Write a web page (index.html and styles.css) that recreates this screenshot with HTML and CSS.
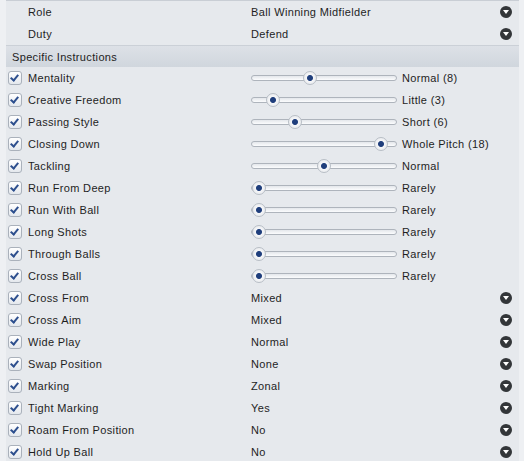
FILE: index.html
```html
<!DOCTYPE html>
<html>
<head>
<meta charset="utf-8">
<link rel="stylesheet" href="styles.css">
</head>
<body>
<div class="panel">
  <div class="row"><span class="cb-space"></span><span class="label">Role</span><span class="value">Ball Winning Midfielder</span><span class="dd"></span></div>
  <div class="row"><span class="cb-space"></span><span class="label">Duty</span><span class="value">Defend</span><span class="dd"></span></div>
  <div class="section">Specific Instructions</div>

  <div class="row"><span class="cb"></span><span class="label">Mentality</span><span class="slider"><span class="track"></span><span class="thumb" style="left:52px"></span></span><span class="sval">Normal (8)</span></div>
  <div class="row"><span class="cb"></span><span class="label">Creative Freedom</span><span class="slider"><span class="track"></span><span class="thumb" style="left:15px"></span></span><span class="sval">Little (3)</span></div>
  <div class="row"><span class="cb"></span><span class="label">Passing Style</span><span class="slider"><span class="track"></span><span class="thumb" style="left:37px"></span></span><span class="sval">Short (6)</span></div>
  <div class="row"><span class="cb"></span><span class="label">Closing Down</span><span class="slider"><span class="track"></span><span class="thumb" style="left:123px"></span></span><span class="sval">Whole Pitch (18)</span></div>
  <div class="row"><span class="cb"></span><span class="label">Tackling</span><span class="slider"><span class="track"></span><span class="thumb" style="left:66px"></span></span><span class="sval">Normal</span></div>
  <div class="row"><span class="cb"></span><span class="label">Run From Deep</span><span class="slider"><span class="track"></span><span class="thumb" style="left:1px"></span></span><span class="sval">Rarely</span></div>
  <div class="row"><span class="cb"></span><span class="label">Run With Ball</span><span class="slider"><span class="track"></span><span class="thumb" style="left:1px"></span></span><span class="sval">Rarely</span></div>
  <div class="row"><span class="cb"></span><span class="label">Long Shots</span><span class="slider"><span class="track"></span><span class="thumb" style="left:1px"></span></span><span class="sval">Rarely</span></div>
  <div class="row"><span class="cb"></span><span class="label">Through Balls</span><span class="slider"><span class="track"></span><span class="thumb" style="left:1px"></span></span><span class="sval">Rarely</span></div>
  <div class="row"><span class="cb"></span><span class="label">Cross Ball</span><span class="slider"><span class="track"></span><span class="thumb" style="left:1px"></span></span><span class="sval">Rarely</span></div>

  <div class="row"><span class="cb"></span><span class="label">Cross From</span><span class="value">Mixed</span><span class="dd"></span></div>
  <div class="row"><span class="cb"></span><span class="label">Cross Aim</span><span class="value">Mixed</span><span class="dd"></span></div>
  <div class="row"><span class="cb"></span><span class="label">Wide Play</span><span class="value">Normal</span><span class="dd"></span></div>
  <div class="row"><span class="cb"></span><span class="label">Swap Position</span><span class="value">None</span><span class="dd"></span></div>
  <div class="row"><span class="cb"></span><span class="label">Marking</span><span class="value">Zonal</span><span class="dd"></span></div>
  <div class="row"><span class="cb"></span><span class="label">Tight Marking</span><span class="value">Yes</span><span class="dd"></span></div>
  <div class="row"><span class="cb"></span><span class="label">Roam From Position</span><span class="value">No</span><span class="dd"></span></div>
  <div class="row"><span class="cb"></span><span class="label">Hold Up Ball</span><span class="value">No</span><span class="dd"></span></div>
</div>
</body>
</html>
```
FILE: styles.css
```css
html, body {
  margin: 0;
  padding: 0;
  background: #eef0f3;
}
body {
  font-family: "Liberation Sans", Arial, sans-serif;
  font-size: 11px;
  letter-spacing: 0.35px;
  color: #1e1e1e;
  overflow: hidden;
}
.panel {
  margin: 0 5px 0 6px;
  border-top: 1px solid #c9ced5;
  background: #e6e9ed;
  display: flex;
  flex-direction: column;
}
.row {
  height: 22px;
  display: flex;
  align-items: center;
}
.cb-space {
  width: 22px;
  flex: none;
}
.cb {
  width: 12px;
  height: 12px;
  margin: 0 6px 0 2px;
  flex: none;
  border: 1px solid #aab1bb;
  border-radius: 3px;
  background: linear-gradient(#ffffff, #e4e8ed);
  position: relative;
}
.cb::after {
  content: "";
  position: absolute;
  left: 3px;
  top: 1px;
  width: 3px;
  height: 6px;
  border: solid #2d4f8e;
  border-width: 0 2px 2px 0;
  transform: rotate(40deg);
}
.label {
  width: 223px;
  flex: none;
}
.value {
  flex: 1;
}
.dd {
  width: 12px;
  height: 12px;
  border-radius: 50%;
  background: #333639;
  margin-right: 7px;
  flex: none;
  position: relative;
}
.dd::after {
  content: "";
  position: absolute;
  left: 3px;
  top: 4px;
  border-left: 3px solid transparent;
  border-right: 3px solid transparent;
  border-top: 4px solid #ffffff;
}
.section {
  height: 21px;
  display: flex;
  align-items: center;
  padding-left: 6px;
  background: linear-gradient(#dde1e7, #d0d6dd);
  border-top: 1px solid #cbd0d7;
  color: #222;
}
.slider {
  width: 146px;
  height: 14px;
  flex: none;
  position: relative;
}
.track {
  position: absolute;
  left: 0;
  right: 0;
  top: 4px;
  height: 4px;
  border: 1px solid #aeb4bc;
  border-radius: 3px;
  background: linear-gradient(#e4e7eb, #fbfcfd);
}
.thumb {
  position: absolute;
  top: 0;
  width: 12px;
  height: 12px;
  border: 1px solid #b8bec6;
  border-radius: 50%;
  background: radial-gradient(circle, #1f3e7c 0, #1f3e7c 2.5px, #f4f5f7 3.5px, #e3e6ea 100%);
}
.sval {
  margin-left: 5px;
}
```
